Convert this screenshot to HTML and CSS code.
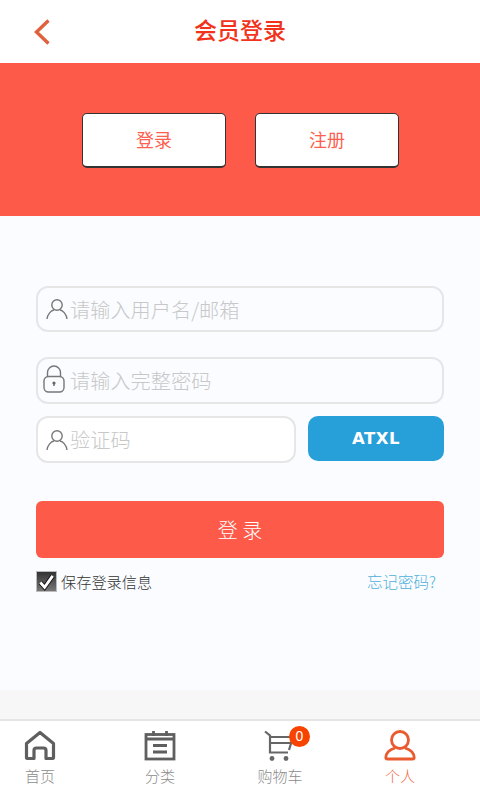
FILE: index.html
```html
<!DOCTYPE html>
<html lang="zh-CN">
<head>
    <meta charset="UTF-8"/>
    <title>会员登录</title>
    <link rel="stylesheet" href="styles.css">
</head>
<body>
    <header class="top-bar">
        <svg class="back-icon" viewBox="0 0 18 28" width="18" height="28"><path d="M15.500 2.500 3.500 14l12 11.500" fill="none" stroke="#e0623c" stroke-width="3.400"/></svg>
        <h1 class="page-title">会员登录</h1>
    </header>
    <section class="banner">
        <a class="banner-btn">登录</a>
        <a class="banner-btn">注册</a>
    </section>
    <main class="login">
        <div class="field field-user">
            <svg class="field-icon" viewBox="0 0 22 22" width="22" height="22"><circle cx="11" cy="7" r="5.200" fill="none" stroke="#777" stroke-width="1.400"/><path d="M1 21c.6-5 4-8.400 7-9M21 21c-.6-5-4-8.400-7-9" fill="none" stroke="#777" stroke-width="1.400"/></svg>
            <span class="placeholder">请输入用户名/邮箱</span>
        </div>
        <div class="field field-pass">
            <svg class="field-icon lock-icon" viewBox="0 0 22 28" width="22" height="28"><path d="M4.500 12V7.500a6.500 6.500 0 0 1 13 0V12" fill="none" stroke="#777" stroke-width="1.400"/><rect x="1" y="11.500" width="20" height="15.500" rx="4.500" fill="none" stroke="#777" stroke-width="1.400"/><circle cx="11" cy="18" r="1.600" fill="#666"/><path d="M11 18v3" stroke="#666" stroke-width="1.400"/></svg>
            <span class="placeholder">请输入完整密码</span>
        </div>
        <div class="code-row">
            <div class="field field-code">
                <svg class="field-icon" viewBox="0 0 22 22" width="22" height="22"><circle cx="11" cy="7" r="5.200" fill="none" stroke="#777" stroke-width="1.400"/><path d="M1 21c.6-5 4-8.400 7-9M21 21c-.6-5-4-8.400-7-9" fill="none" stroke="#777" stroke-width="1.400"/></svg>
                <span class="placeholder">验证码</span>
            </div>
            <div class="captcha">ATXL</div>
        </div>
        <button class="submit">登 录</button>
        <div class="options">
            <label class="remember">
                <span class="check"><svg viewBox="0 0 20 20" width="20" height="20"><path d="M3.500 10.500 8 15.500 16.500 3.500" fill="none" stroke="#111" stroke-width="5"/><path d="M3.500 10.500 8 15.500 16.500 3.500" fill="none" stroke="#fff" stroke-width="3"/></svg></span>
                保存登录信息
            </label>
            <a class="forgot">忘记密码?</a>
        </div>
    </main>
    <div class="spacer"></div>
    <nav class="tabs">
        <a class="tab">
            <svg viewBox="0 0 32 32" width="32" height="32"><path d="M2.500 28V13.500L16 2.500l13.500 11V28a1 1 0 0 1-1 .5H22v-8a2.500 2.500 0 0 0-2.500-2.500h-7A2.500 2.500 0 0 0 10 20.500v8H3.500a1 1 0 0 1-1-.5Z" fill="none" stroke="#5f5f5f" stroke-width="3.200" stroke-linejoin="round"/></svg>
            <span>首页</span>
        </a>
        <a class="tab">
            <svg viewBox="0 0 32 32" width="32" height="32"><rect x="2" y="4.500" width="28" height="24.500" fill="none" stroke="#5f5f5f" stroke-width="2.800"/><path d="M2 9h28M9.500 1V6M22.500 1V6M9 15.500h14M9 22h14" fill="none" stroke="#5f5f5f" stroke-width="2.800"/></svg>
            <span>分类</span>
        </a>
        <a class="tab">
            <span class="cart">
                <svg viewBox="0 0 32 32" width="32" height="32"><path d="M1 1.500 6 5.500V22.500H24M6 7H29L25 20M6 13H27" fill="none" stroke="#666" stroke-width="2.200"/><circle cx="8" cy="28.500" r="2.400" fill="#666"/><circle cx="22" cy="28.500" r="2.400" fill="#666"/></svg>
                <i class="badge">0</i>
            </span>
            <span>购物车</span>
        </a>
        <a class="tab tab-active">
            <svg viewBox="0 0 32 32" width="32" height="32"><circle cx="16" cy="10" r="8.500" fill="none" stroke="#ea5a2e" stroke-width="2.800"/><path d="M11 18C6 19.500 2 23 1.800 27.500c0 1 .6 1.500 1.700 1.500h25c1.100 0 1.700-.5 1.700-1.500C30 23 26 19.500 21 18" fill="none" stroke="#ea5a2e" stroke-width="2.800"/></svg>
            <span>个人</span>
        </a>
    </nav>
</body>
</html>
```

FILE: styles.css
```css
* {
    box-sizing: border-box;
}

html, body {
    margin: 0;
    height: 800px;
    overflow: hidden;
}

body {
    display: flex;
    flex-direction: column;
    background-color: #fafcff;
    font-family: "Noto Sans CJK SC", "Liberation Sans", sans-serif;
    font-weight: 300;
}

.top-bar {
    height: 63px;
    background-color: #fff;
    display: flex;
    align-items: center;
    justify-content: center;
    padding-bottom: 5px;
    position: relative;
}

.back-icon {
    position: absolute;
    left: 33px;
    top: 18px;
}

.page-title {
    margin: 0;
    font-size: 23px;
    font-weight: 500;
    color: #f2321a;
}

.banner {
    height: 153px;
    background-color: #fd5a4a;
    display: flex;
    justify-content: center;
    gap: 29px;
    padding-top: 50px;
    padding-left: 1px;
}

.banner-btn {
    width: 144px;
    height: 55px;
    background-color: #fff;
    border: 1px solid #333;
    border-bottom-width: 2px;
    border-radius: 5px;
    color: #fd5f50;
    font-size: 18px;
    font-weight: 400;
    padding-bottom: 2px;
    display: flex;
    align-items: center;
    justify-content: center;
}

.login {
    height: 474px;
    padding: 70px 36px 0;
    display: flex;
    flex-direction: column;
}

.field {
    height: 46px;
    border: 2px solid #e6e6e6;
    border-radius: 12px;
    background-color: #fff;
    display: flex;
    align-items: center;
    padding-left: 8px;
}

.field-user {
    background-color: #fafcff;
}

.field-pass {
    height: 47px;
    margin-top: 25px;
    background-color: #fafcff;
    padding-left: 5px;
}

.field-icon {
    flex: none;
    margin-right: 2px;
}

.lock-icon {
    margin-right: 5px;
    margin-bottom: 4px;
}

.placeholder {
    color: #c8c8c8;
    font-size: 20.200px;
}

.code-row {
    display: flex;
    align-items: flex-start;
    gap: 12px;
    margin-top: 12px;
}

.field-code {
    width: 260px;
    height: 47px;
    flex: none;
}

.field-code .field-icon {
    margin-right: 2px;
}

.captcha {
    flex: 1;
    height: 45px;
    border-radius: 10px;
    background-color: #279fd9;
    color: #fff;
    font-family: "DejaVu Sans", sans-serif;
    font-weight: 700;
    font-size: 16.500px;
    letter-spacing: .5px;
    display: flex;
    align-items: center;
    justify-content: center;
}

.submit {
    height: 57px;
    margin-top: 38px;
    border: 0;
    border-radius: 6px;
    background-color: #fd5a4a;
    color: #fff;
    font: inherit;
    font-size: 20px;
}

.options {
    display: flex;
    justify-content: space-between;
    align-items: center;
    margin-top: 12px;
    padding-right: 8px;
}

.remember {
    display: flex;
    align-items: center;
    gap: 4px;
    font-size: 15.200px;
    color: #333;
}

.check {
    width: 21px;
    height: 21px;
    border: 1px solid #bbb;
    background: linear-gradient(#333, #777);
    display: flex;
}

.forgot {
    font-size: 15.500px;
    color: #4fb0da;
}

.spacer {
    height: 29px;
    background-color: #f7f7f7;
}

.tabs {
    height: 81px;
    background-color: #fff;
    border-top: 2px solid #e5e5e5;
    display: flex;
    gap: 40px;
}

.tab {
    width: 80px;
    display: flex;
    flex-direction: column;
    align-items: center;
    padding-top: 9px;
    font-size: 15px;
    line-height: 22px;
    color: #8c8c8c;
}

.tab svg {
    display: block;
}

.tab > span:last-child {
    margin-top: 3px;
}

.cart {
    position: relative;
    display: block;
}

.badge {
    position: absolute;
    right: -14px;
    top: -4px;
    width: 21px;
    height: 21px;
    border-radius: 50%;
    background-color: #f84300;
    color: #fff;
    font-style: normal;
    font-size: 14px;
    line-height: 21px;
    text-align: center;
    font-family: "Liberation Sans", sans-serif;
}

.tab-active {
    color: #ee6a45;
}
```
